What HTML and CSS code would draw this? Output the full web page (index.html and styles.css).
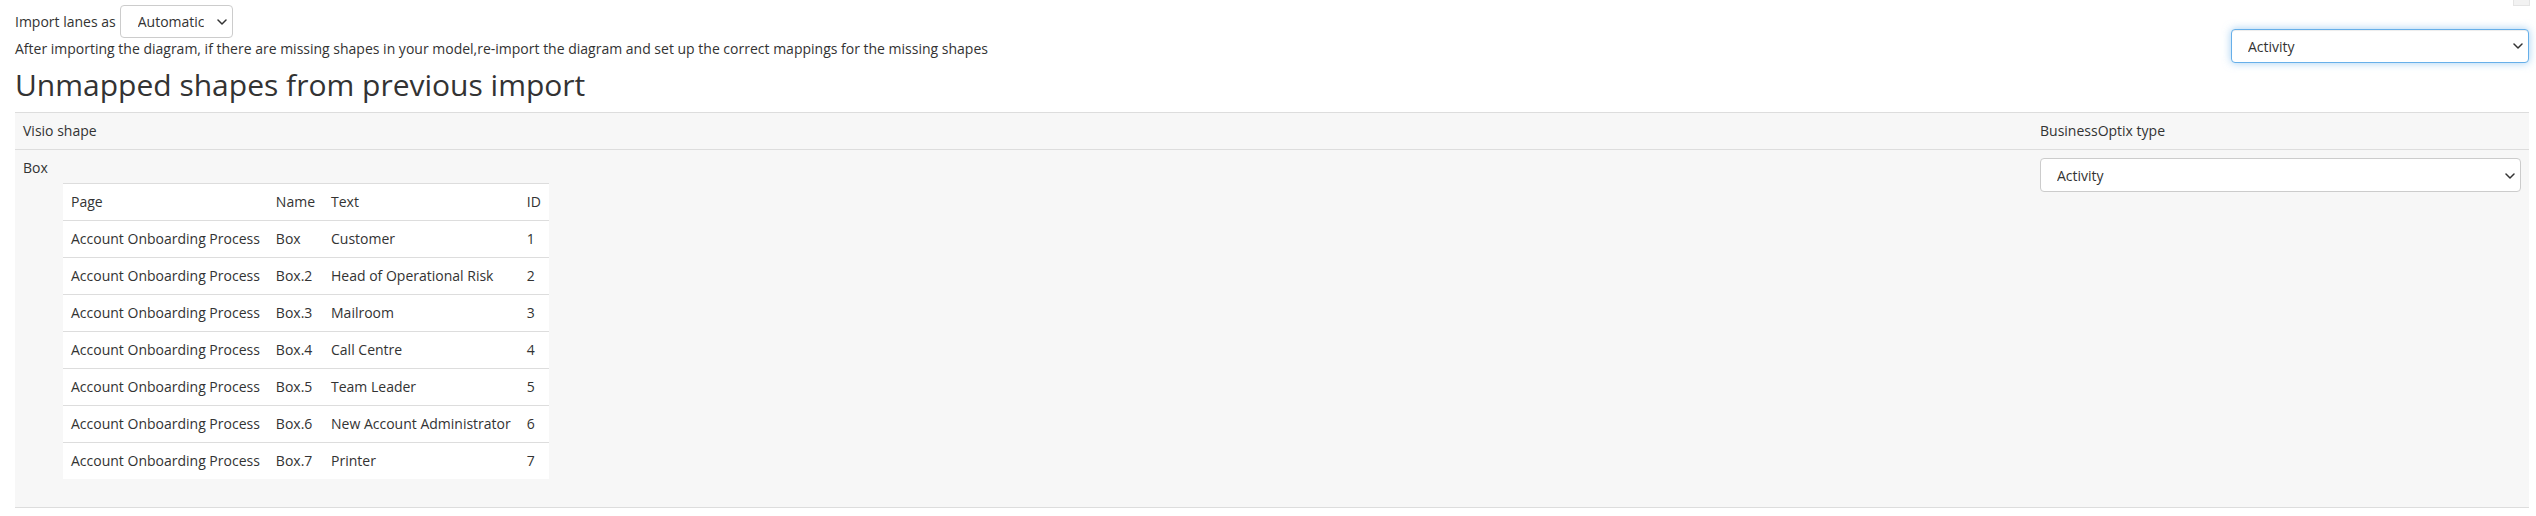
FILE: index.html
```html
<!DOCTYPE html>
<html>
<head>
    <title>Import Visio Diagram</title>
    <link rel="stylesheet" href="styles.css">
</head>
<body>
    <div class="corner-tab"></div>

    <div class="import-bar">
        <div class="import-options">
            <div class="lane-row">
                <label for="lane-mode">Import lanes as</label>
                <span class="select-wrap lane-select">
                    <select id="lane-mode">
                        <option>Automatic</option>
                        <option>Pools</option>
                        <option>Lanes</option>
                    </select>
                    <svg class="chevron" width="10" height="6" viewBox="0 0 10 6"><polyline points="1,1 5,5 9,1" fill="none" stroke="#333" stroke-width="1.5" stroke-linecap="round" stroke-linejoin="round"/></svg>
                </span>
            </div>
            <p class="hint">After importing the diagram, if there are missing shapes in your model,re-import the diagram and set up the correct mappings for the missing shapes</p>
        </div>
        <span class="select-wrap default-select">
            <select class="focused">
                <option>Activity</option>
                <option>Event</option>
                <option>Gateway</option>
            </select>
            <svg class="chevron" width="10" height="6" viewBox="0 0 10 6"><polyline points="1,1 5,5 9,1" fill="none" stroke="#333" stroke-width="1.5" stroke-linecap="round" stroke-linejoin="round"/></svg>
        </span>
    </div>

    <h2>Unmapped shapes from previous import</h2>

    <table class="mapping-table">
        <thead>
            <tr>
                <th>Visio shape</th>
                <th class="type-col">BusinessOptix type</th>
            </tr>
        </thead>
        <tbody>
            <tr>
                <td>
                    <div>Box</div>
                    <table class="shape-table">
                        <tr><td>Page</td><td>Name</td><td>Text</td><td>ID</td></tr>
                        <tr><td>Account Onboarding Process</td><td>Box</td><td>Customer</td><td>1</td></tr>
                        <tr><td>Account Onboarding Process</td><td>Box.2</td><td>Head of Operational Risk</td><td>2</td></tr>
                        <tr><td>Account Onboarding Process</td><td>Box.3</td><td>Mailroom</td><td>3</td></tr>
                        <tr><td>Account Onboarding Process</td><td>Box.4</td><td>Call Centre</td><td>4</td></tr>
                        <tr><td>Account Onboarding Process</td><td>Box.5</td><td>Team Leader</td><td>5</td></tr>
                        <tr><td>Account Onboarding Process</td><td>Box.6</td><td>New Account Administrator</td><td>6</td></tr>
                        <tr><td>Account Onboarding Process</td><td>Box.7</td><td>Printer</td><td>7</td></tr>
                    </table>
                </td>
                <td class="type-col">
                    <span class="select-wrap full-select">
                        <select>
                            <option>Activity</option>
                            <option>Event</option>
                            <option>Gateway</option>
                        </select>
                        <svg class="chevron" width="10" height="6" viewBox="0 0 10 6"><polyline points="1,1 5,5 9,1" fill="none" stroke="#333" stroke-width="1.5" stroke-linecap="round" stroke-linejoin="round"/></svg>
                    </span>
                </td>
            </tr>
        </tbody>
    </table>
</body>
</html>
```

FILE: styles.css
```css
body {
    margin: 0;
    padding: 5px 7px 0 15px;
    font-family: "Open Sans", sans-serif;
    font-size: 14px;
    line-height: 20px;
    color: #333;
    background-color: white;
}

.corner-tab {
    position: absolute;
    top: 0;
    right: 6px;
    width: 15px;
    height: 5px;
    background-color: #f2f2f2;
    border: 1px solid #e4e4e4;
    border-top: none;
}

.import-bar {
    display: flex;
    justify-content: space-between;
    align-items: flex-start;
}

.lane-row {
    display: flex;
    align-items: center;
    gap: 4px;
}

.hint {
    margin: 1px 0 0;
}

.select-wrap {
    position: relative;
    display: inline-block;
}

.select-wrap select {
    -webkit-appearance: none;
    appearance: none;
    width: 100%;
    height: 34px;
    margin: 0;
    padding: 0 28px 0 16px;
    font-family: "Open Sans", sans-serif;
    font-size: 14px;
    color: #333;
    background-color: white;
    border: 1px solid #ccc;
    border-radius: 4px;
    outline: none;
}

.select-wrap .chevron {
    position: absolute;
    right: 6px;
    top: 14px;
    pointer-events: none;
}

.lane-select {
    width: 113px;
}

.lane-select select {
    height: 33px;
    padding-left: 17px;
}

.default-select {
    width: 298px;
    margin-top: 24px;
}

.select-wrap select.focused {
    border-color: #66afe9;
    box-shadow: inset 0 1px 1px rgba(0, 0, 0, .075), 0 0 8px rgba(102, 175, 233, .6);
}

.full-select {
    display: block;
}

.full-select .chevron {
    top: 15px;
}

h2 {
    margin: 5px 0 11px;
    font-size: 30px;
    font-weight: 400;
    line-height: 33px;
}

.mapping-table {
    width: 100%;
    border-collapse: collapse;
    background-color: #f7f7f7;
    border-bottom: 1px solid #ddd;
}

.mapping-table th,
.mapping-table td {
    padding: 8px;
    text-align: left;
    font-weight: normal;
    vertical-align: top;
    border-top: 1px solid #ddd;
}

.mapping-table .type-col {
    width: 497px;
    box-sizing: border-box;
}

.shape-table {
    margin: 5px 0 20px 40px;
    border-collapse: collapse;
    background-color: white;
}

.mapping-table .shape-table td {
    padding: 8px;
    border-top: 1px solid #ddd;
    white-space: nowrap;
}
```
